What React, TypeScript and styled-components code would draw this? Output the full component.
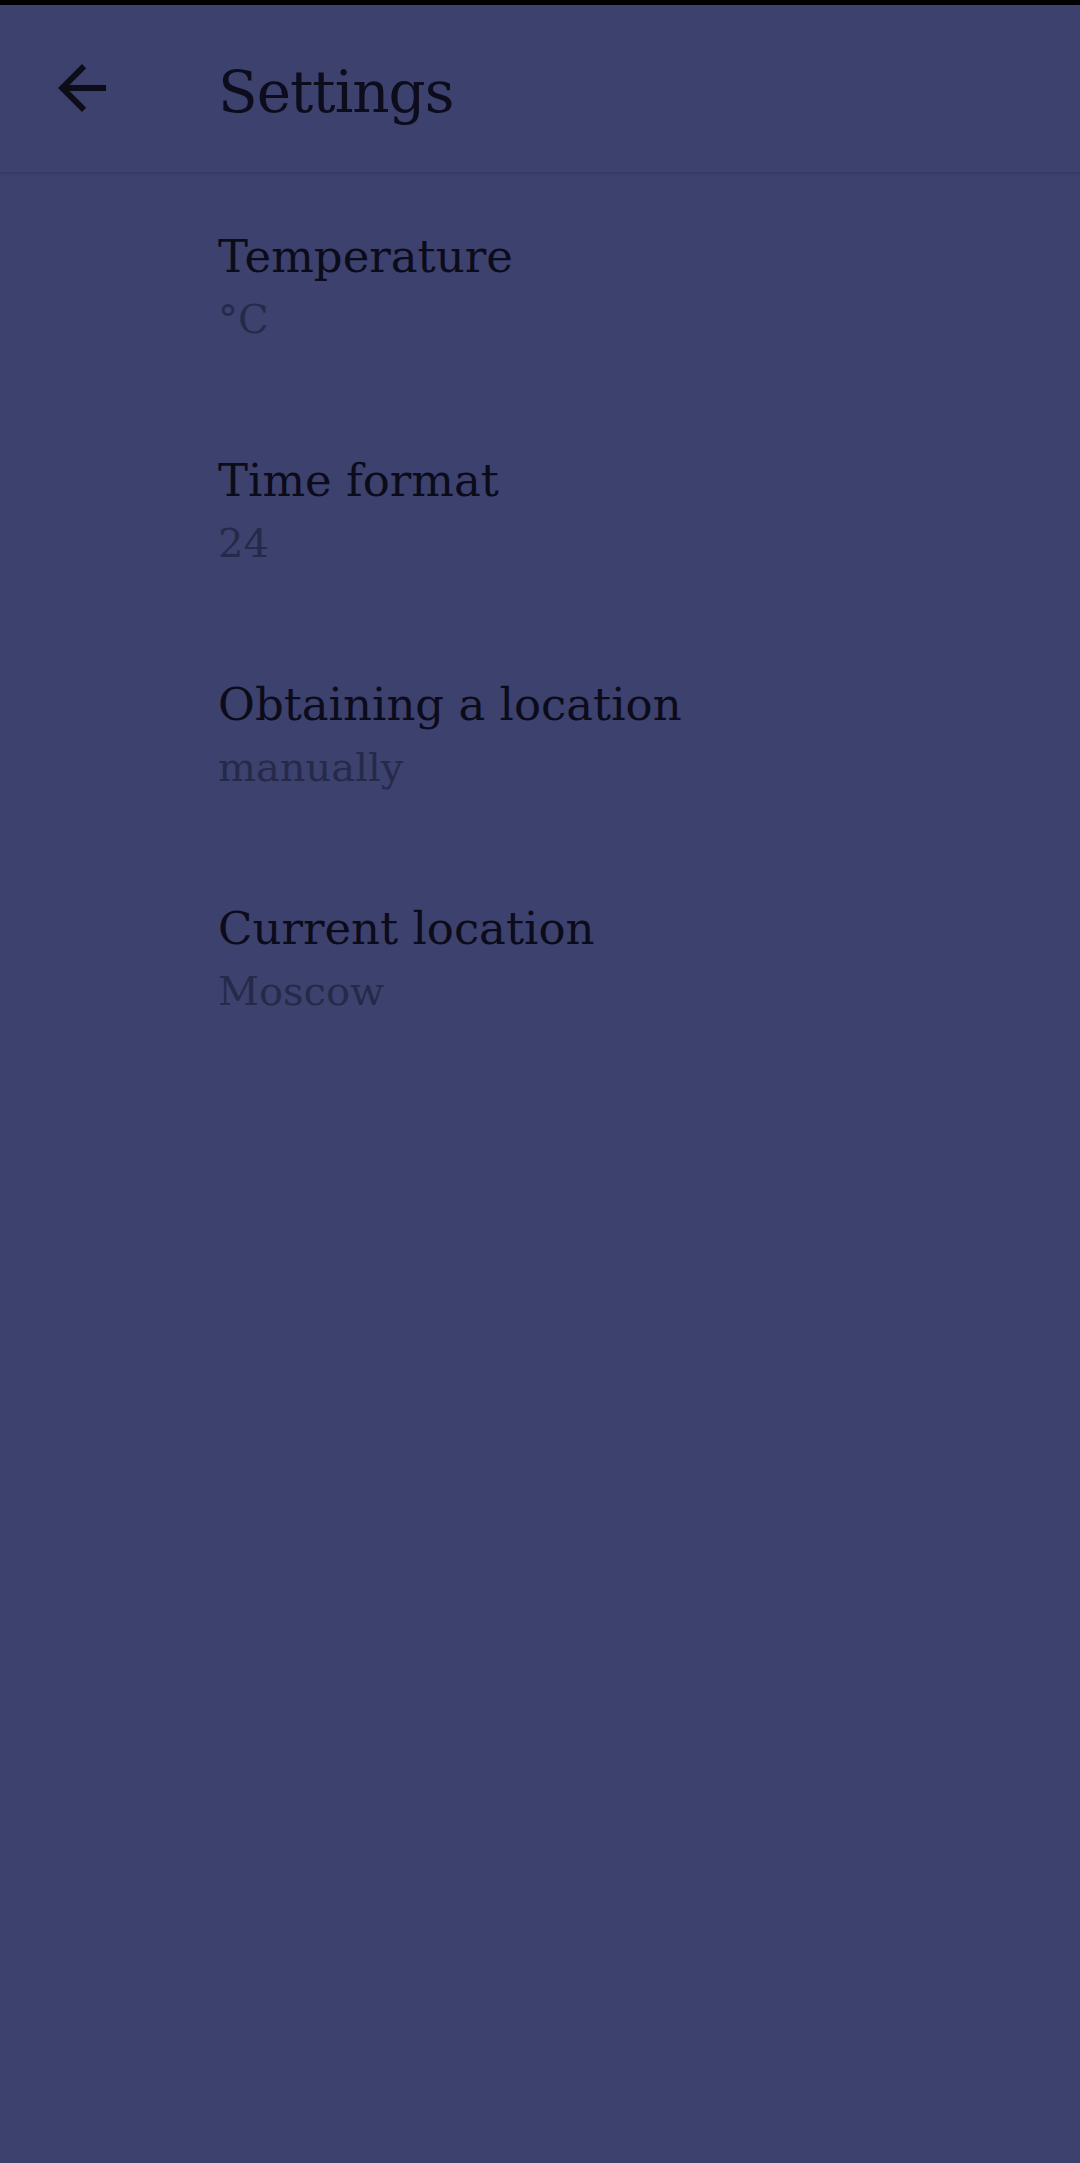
import React from "react";
import styled, { createGlobalStyle } from "styled-components";

const GlobalStyle = createGlobalStyle`
  html, body {
    margin: 0;
    padding: 0;
    background: #3d416e;
  }
  body {
    font-family: "DejaVu Serif", "Liberation Serif", serif;
  }
`;

const Screen = styled.div`
  min-height: 2163px;
  background: #3d416e;
  display: flex;
  flex-direction: column;
`;

const StatusStrip = styled.div`
  height: 5px;
  background: #000;
`;

const AppBar = styled.header`
  height: 167px;
  box-sizing: border-box;
  padding: 47px 0 0 46px;
  display: flex;
  align-items: flex-start;
  gap: 100px;
  background: #3d416e;
  box-shadow: 0 2px 3px rgba(0, 0, 0, 0.12);
  position: relative;
  z-index: 1;
`;

const IconButton = styled.button`
  width: 72px;
  height: 72px;
  padding: 0;
  border: none;
  background: transparent;
  display: flex;
  align-items: center;
  justify-content: center;
  color: #0d0d1a;
`;

const AppTitle = styled.h1`
  margin: 7px 0 0;
  font-size: 58px;
  line-height: 66px;
  font-weight: 400;
  letter-spacing: -1px;
  color: #0c0c1c;
`;

const List = styled.ul`
  list-style: none;
  margin: 0;
  padding: 2px 0 0;
`;

const Item = styled.li`
  padding: 53px 0 53px 218px;
  display: flex;
  flex-direction: column;
`;

const ItemTitle = styled.div`
  font-size: 45px;
  line-height: 60px;
  color: #0b0b1a;
`;

const ItemValue = styled.div`
  margin-top: 6px;
  font-size: 40px;
  line-height: 52px;
  color: #262a4a;
`;

const settings = [
  { title: "Temperature", value: "°C" },
  { title: "Time format", value: "24" },
  { title: "Obtaining a location", value: "manually" },
  { title: "Current location", value: "Moscow" },
];

export default function App() {
  return (
    <>
      <GlobalStyle />
      <Screen>
        <StatusStrip />
        <AppBar>
          <IconButton aria-label="Back">
            <svg width="72" height="72" viewBox="0 0 24 24" fill="currentColor">
              <path d="M20 11H7.83l5.59-5.59L12 4l-8 8 8 8 1.41-1.41L7.83 13H20v-2z" />
            </svg>
          </IconButton>
          <AppTitle>Settings</AppTitle>
        </AppBar>
        <List>
          {settings.map((s) => (
            <Item key={s.title}>
              <ItemTitle>{s.title}</ItemTitle>
              <ItemValue>{s.value}</ItemValue>
            </Item>
          ))}
        </List>
      </Screen>
    </>
  );
}
